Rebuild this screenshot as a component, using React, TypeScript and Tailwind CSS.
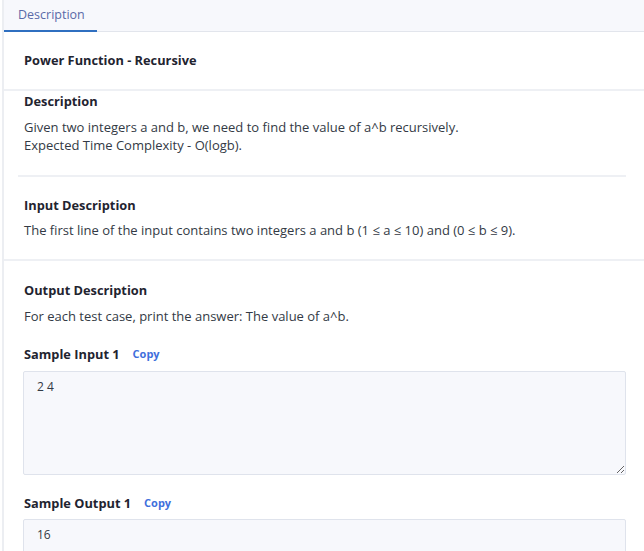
import React from 'react';

const Copy: React.FC = () => (
  <button className="text-[11px] font-bold text-[#3f6fdc] leading-[18px]">Copy</button>
);

const App: React.FC = () => {
  return (
    <div
      className="min-h-screen bg-white ml-[2px] border-l-2 border-[#eceef2]"
      style={{ fontFamily: '"Open Sans", "Noto Sans", sans-serif' }}
    >
      {/* tabs */}
      <div className="flex h-[32px] bg-[#f7f8fc] border-b border-[#e2e5ec]">
        <div className="w-[93px] pl-[14px] flex items-center border-b-2 border-[#2f6fc0] -mb-px text-[12.5px] text-[#5a6aa8]">
          Description
        </div>
      </div>

      <div className="h-[57px] flex items-center pl-[20px]">
        <h1 className="text-[12.8px] font-bold text-[#1f2430]">Power Function - Recursive</h1>
      </div>
      <div className="h-[2px] bg-[#eef0f4]" />

      <div className="pl-[20px] pr-[18px] pt-[1px] text-[#1f2430]">
        <h2 className="text-[12.8px] font-bold leading-[18px]">Description</h2>
        <p className="mt-[8px] text-[13px] leading-[18px] text-[#333a45]">
          Given two integers a and b, we need to find the value of a^b recursively.
          <br />
          Expected Time Complexity - O(logb).
        </p>
        <div className="mt-[21px] -ml-[6px] h-[2px] bg-[#eef0f4]" />

        <h2 className="mt-[19px] text-[12.8px] font-bold leading-[18px]">Input Description</h2>
        <p className="mt-[7px] text-[13px] leading-[18px] text-[#333a45]">
          The first line of the input contains two integers a and b (1 ≤ a ≤ 10) and (0 ≤ b ≤ 9).
        </p>
      </div>

      <div className="mt-[20px] h-[2px] bg-[#eef0f4]" />

      <div className="pl-[20px] pr-[18px] pb-6 text-[#1f2430]">
        <h2 className="mt-[20px] text-[12.8px] font-bold leading-[18px]">Output Description</h2>
        <p className="mt-[8px] text-[13px] leading-[18px] text-[#333a45]">
          For each test case, print the answer: The value of a^b.
        </p>

        <div className="mt-[20px] flex items-center gap-[13px]">
          <h3 className="text-[12.8px] font-bold leading-[18px]">Sample Input 1</h3>
          <Copy />
        </div>
        <textarea
          readOnly
          value="2 4"
          className="mt-[8px] -ml-px block w-[calc(100%+1px)] h-[104px] rounded-[2px] border border-[#dfe3ec] bg-[#f7f8fc] px-[13px] pt-[6px] text-[12px] leading-[18px] text-[#333a45] outline-none"
        />

        <div className="mt-[19px] flex items-center gap-[13px]">
          <h3 className="text-[12.8px] font-bold leading-[18px]">Sample Output 1</h3>
          <Copy />
        </div>
        <textarea
          readOnly
          value="16"
          className="mt-[7px] -ml-px block w-[calc(100%+1px)] h-[104px] rounded-[2px] border border-[#dfe3ec] bg-[#f7f8fc] px-[13px] pt-[6px] text-[12px] leading-[18px] text-[#333a45] outline-none"
        />
      </div>
    </div>
  );
};

export default App;
